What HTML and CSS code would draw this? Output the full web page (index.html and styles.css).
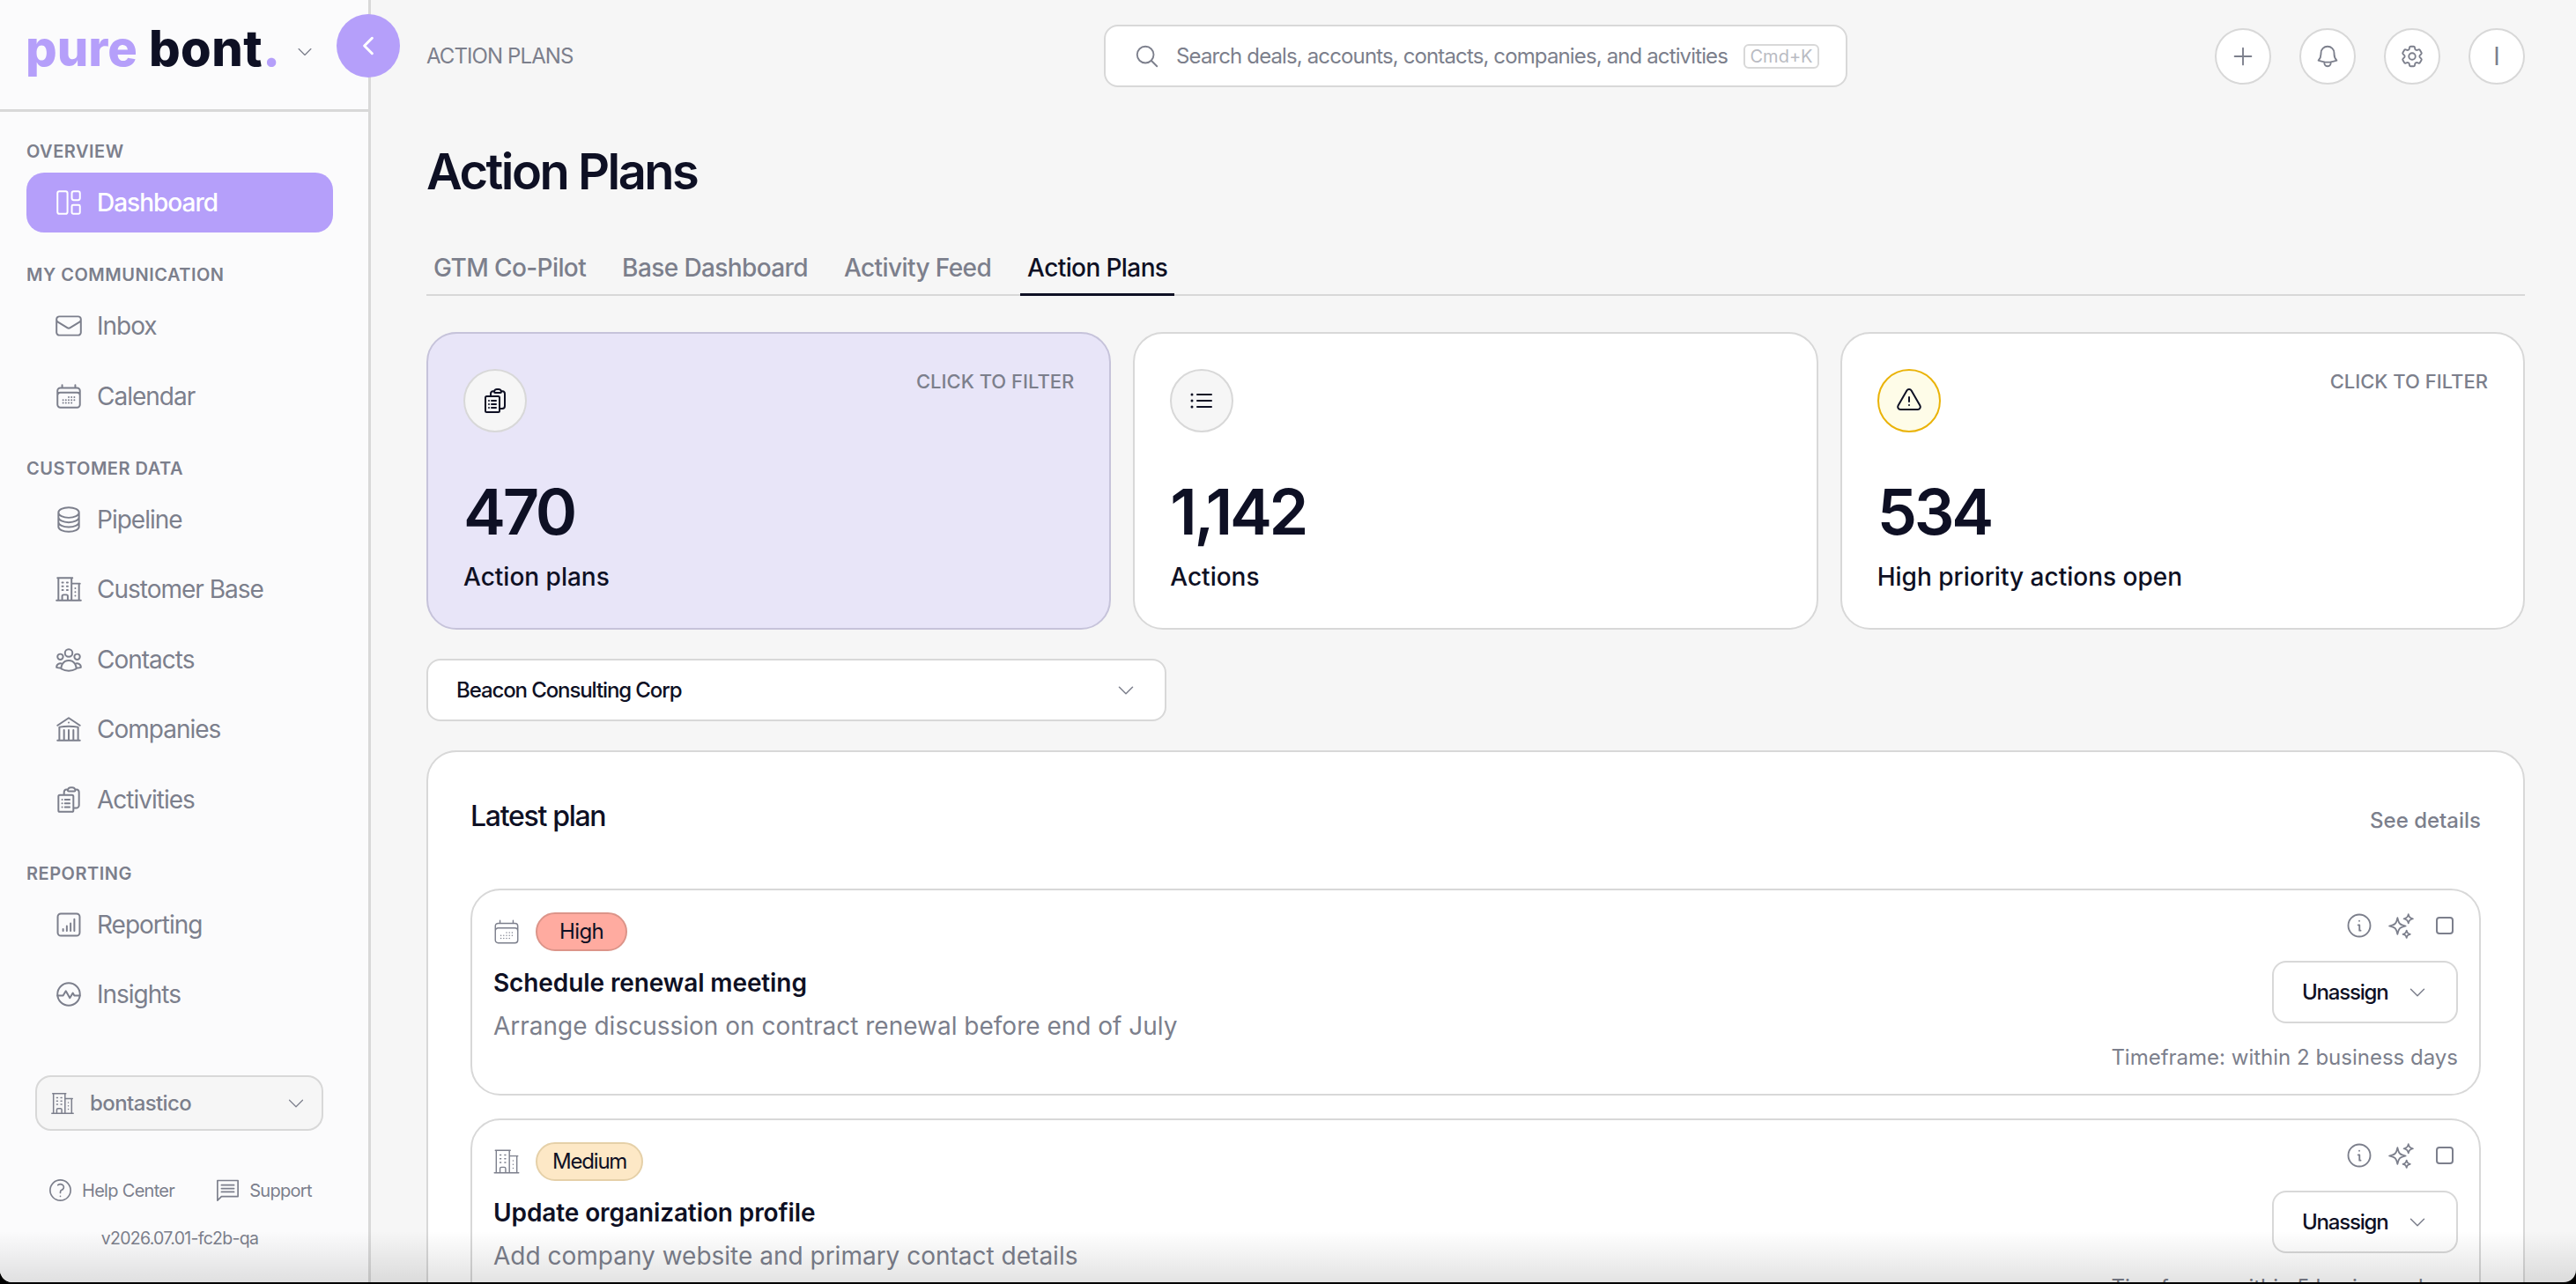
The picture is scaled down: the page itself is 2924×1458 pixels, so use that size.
FILE: index.html
```html
<!doctype html>
<html lang="en">
  <head>
    <title>Action Plans</title>
    <meta charset="utf-8"/>
    <link rel="stylesheet" href="styles.css">
  </head>
  <body>
    <svg class="icon-defs" xmlns="http://www.w3.org/2000/svg">
      <symbol id="i-chevron" viewBox="0 0 24 24"><path d="M19.5 8.25l-7.5 7.5-7.5-7.5"/></symbol>
      <symbol id="i-search" viewBox="0 0 24 24"><path d="M21 21l-5.197-5.197m0 0A7.5 7.5 0 105.196 5.196a7.5 7.5 0 0010.607 10.607z"/></symbol>
      <symbol id="i-plus" viewBox="0 0 24 24"><path d="M12 4.5v15m7.5-7.5h-15"/></symbol>
      <symbol id="i-bell" viewBox="0 0 24 24"><path d="M14.857 17.082a23.848 23.848 0 005.454-1.31A8.967 8.967 0 0118 9.75v-.7V9A6 6 0 006 9v.75a8.967 8.967 0 01-2.312 6.022c1.733.64 3.56 1.085 5.455 1.31m5.714 0a24.255 24.255 0 01-5.714 0m5.714 0a3 3 0 11-5.714 0"/></symbol>
      <symbol id="i-cog" viewBox="0 0 24 24"><path d="M9.594 3.94c.09-.542.56-.94 1.11-.94h2.593c.55 0 1.02.398 1.11.94l.213 1.281c.063.374.313.686.645.87.074.04.147.083.22.127.324.196.72.257 1.075.124l1.217-.456a1.125 1.125 0 011.37.49l1.296 2.247a1.125 1.125 0 01-.26 1.431l-1.003.827c-.293.24-.438.613-.431.992a6.759 6.759 0 010 .255c-.007.378.138.75.43.99l1.005.828c.424.35.534.954.26 1.43l-1.298 2.247a1.125 1.125 0 01-1.369.491l-1.217-.456c-.355-.133-.75-.072-1.076.124a6.57 6.57 0 01-.22.128c-.331.183-.581.495-.644.869l-.213 1.28c-.09.543-.56.941-1.11.941h-2.594c-.55 0-1.02-.398-1.11-.94l-.213-1.281c-.062-.374-.312-.686-.644-.87a6.52 6.52 0 01-.22-.127c-.325-.196-.72-.257-1.076-.124l-1.217.456a1.125 1.125 0 01-1.369-.49l-1.297-2.247a1.125 1.125 0 01.26-1.431l1.004-.827c.292-.24.437-.613.43-.992a6.932 6.932 0 010-.255c.007-.378-.138-.75-.43-.99l-1.004-.828a1.125 1.125 0 01-.26-1.43l1.297-2.247a1.125 1.125 0 011.37-.491l1.216.456c.356.133.751.072 1.076-.124.072-.044.146-.087.22-.128.332-.183.582-.495.644-.869l.214-1.281zM15 12a3 3 0 11-6 0 3 3 0 016 0z"/></symbol>
      <symbol id="i-dashboard" viewBox="0 0 24 24"><rect x="3" y="3" width="8" height="18" rx="1.5"/><rect x="14.5" y="3" width="6.5" height="7" rx="1.5"/><rect x="14.5" y="14" width="6.5" height="7" rx="1"/></symbol>
      <symbol id="i-mail" viewBox="0 0 24 24"><path d="M21.75 6.75v10.5a2.25 2.25 0 01-2.25 2.25h-15a2.25 2.25 0 01-2.25-2.25V6.75m19.5 0A2.25 2.25 0 0019.5 4.5h-15a2.25 2.25 0 00-2.25 2.25m19.5 0v.243a2.25 2.25 0 01-1.07 1.916l-7.5 4.615a2.25 2.25 0 01-2.36 0L3.32 8.91a2.25 2.25 0 01-1.07-1.916V6.75"/></symbol>
      <symbol id="i-calendar" viewBox="0 0 24 24"><path d="M6.75 3v2.25M17.25 3v2.25M3 18.75V7.5a2.25 2.25 0 012.25-2.25h13.5A2.25 2.25 0 0121 7.5v11.25m-18 0A2.25 2.25 0 005.25 21h13.5A2.25 2.25 0 0021 18.75m-18 0v-7.5A2.25 2.25 0 015.25 9h13.5A2.25 2.25 0 0121 11.25v7.5m-9-6h.008v.008H12v-.008zM12 15h.008v.008H12V15zm0 2.25h.008v.008H12v-.008zM9.75 15h.008v.008H9.75V15zm0 2.25h.008v.008H9.75v-.008zM7.5 15h.008v.008H7.5V15zm0 2.25h.008v.008H7.5v-.008zm6.75-4.5h.008v.008h-.008v-.008zm0 2.25h.008v.008h-.008V15zm0 2.25h.008v.008h-.008v-.008zm2.25-4.5h.008v.008H16.5v-.008zm0 2.25h.008v.008H16.5V15z"/></symbol>
      <symbol id="i-stack" viewBox="0 0 24 24"><path d="M20.25 6.375c0 2.278-3.694 4.125-8.25 4.125S3.75 8.653 3.75 6.375m16.5 0c0-2.278-3.694-4.125-8.25-4.125S3.75 4.097 3.75 6.375m16.5 0v11.25c0 2.278-3.694 4.125-8.25 4.125s-8.25-1.847-8.25-4.125V6.375m16.5 0v3.75m-16.5-3.75v3.75m16.5 0v3.75C20.25 16.153 16.556 18 12 18s-8.25-1.847-8.25-4.125v-3.75m16.5 0c0 2.278-3.694 4.125-8.25 4.125s-8.25-1.847-8.25-4.125"/></symbol>
      <symbol id="i-building" viewBox="0 0 24 24"><path d="M2.25 21h19.5m-18-18v18m10.5-18v18m6-13.5V21M6.75 6.75h.75m-.75 3h.75m-.75 3h.75m3-6h.75m-.75 3h.75m-.75 3h.75M6.75 21v-3.375c0-.621.504-1.125 1.125-1.125h2.25c.621 0 1.125.504 1.125 1.125V21M3 3h12m-.75 4.5H21m-3.75 3.75h.008v.008h-.008v-.008zm0 3h.008v.008h-.008v-.008zm0 3h.008v.008h-.008v-.008z"/></symbol>
      <symbol id="i-group" viewBox="0 0 24 24"><path d="M18 18.72a9.094 9.094 0 003.741-.479 3 3 0 00-4.682-2.72m.94 3.198l.001.031c0 .225-.012.447-.037.666A11.944 11.944 0 0112 21c-2.17 0-4.207-.576-5.963-1.584A6.062 6.062 0 016 18.719m12 0a5.971 5.971 0 00-.941-3.197m0 0A5.995 5.995 0 0012 12.75a5.995 5.995 0 00-5.058 2.772m0 0a3 3 0 00-4.681 2.72 8.986 8.986 0 003.74.477m.94-3.197a5.971 5.971 0 00-.94 3.197M15 6.75a3 3 0 11-6 0 3 3 0 016 0zm6 3a2.25 2.25 0 11-4.5 0 2.25 2.25 0 014.5 0zm-13.5 0a2.25 2.25 0 11-4.5 0 2.25 2.25 0 014.5 0z"/></symbol>
      <symbol id="i-library" viewBox="0 0 24 24"><path d="M12 21v-8.25M15.75 21v-8.25M8.25 21v-8.25M3 9l9-6 9 6m-1.5 12V10.332A48.36 48.36 0 0012 9.75c-2.551 0-5.056.2-7.5.582V21M3 21h18M12 6.75h.008v.008H12V6.75z"/></symbol>
      <symbol id="i-clipboard" viewBox="0 0 24 24"><path d="M9 12h3.75M9 15h3.75M9 18h3.75m3 .75H18a2.25 2.25 0 002.25-2.25V6.108c0-1.135-.845-2.098-1.976-2.192a48.424 48.424 0 00-1.123-.08m-5.801 0c-.065.21-.1.433-.1.664 0 .414.336.75.75.75h4.5a.75.75 0 00.75-.75 2.25 2.25 0 00-.1-.664m-5.8 0A2.251 2.251 0 0113.5 2.25H15c1.012 0 1.867.668 2.15 1.586m-5.8 0c-.376.023-.75.05-1.124.08C9.095 4.01 8.25 4.973 8.25 6.108V8.25m0 0H4.875c-.621 0-1.125.504-1.125 1.125v11.25c0 .621.504 1.125 1.125 1.125h9.75c.621 0 1.125-.504 1.125-1.125V9.375c0-.621-.504-1.125-1.125-1.125H8.25zM6.75 12h.008v.008H6.75V12zm0 3h.008v.008H6.75V15zm0 3h.008v.008H6.75V18z"/></symbol>
      <symbol id="i-chart" viewBox="0 0 24 24"><rect x="3.2" y="3.2" width="17.6" height="17.6" rx="2.5"/><path d="M7.5 17v-1.5M10.5 17v-4M13.5 17v-6M16.5 17V7.5"/></symbol>
      <symbol id="i-pulse" viewBox="0 0 24 24"><circle cx="12" cy="12" r="9"/><path d="M3 13h4.5l2.2-3.6 3.2 5.6 2.4-4 1.2 2H21"/></symbol>
      <symbol id="i-help" viewBox="0 0 24 24"><path d="M9.879 7.519c1.171-1.025 3.071-1.025 4.242 0 1.172 1.025 1.172 2.687 0 3.712-.203.179-.43.326-.67.442-.745.361-1.45.999-1.45 1.827v.75M21 12a9 9 0 11-18 0 9 9 0 0118 0zm-9 5.25h.008v.008H12v-.008z"/></symbol>
      <symbol id="i-chat" viewBox="0 0 24 24"><path d="M3 3.5h18v14H6.5L3 21z"/><path d="M6.5 7.5h11M6.5 10.5h11M6.5 13.5h11"/></symbol>
      <symbol id="i-info" viewBox="0 0 24 24"><circle cx="12" cy="12" r="10"/><path d="M11 11.5h1.2v5h1M12 7.8h.01"/></symbol>
      <symbol id="i-sparkles" viewBox="0 0 24 24"><path d="M9.813 15.904L9 18.75l-.813-2.846a4.5 4.5 0 00-3.09-3.09L2.25 12l2.846-.813a4.5 4.5 0 003.09-3.09L9 5.25l.813 2.846a4.5 4.5 0 003.09 3.09L15.75 12l-2.846.813a4.5 4.5 0 00-3.09 3.09zM18.259 8.715L18 9.75l-.259-1.035a3.375 3.375 0 00-2.455-2.456L14.25 6l1.036-.259a3.375 3.375 0 002.455-2.456L18 2.25l.259 1.035a3.375 3.375 0 002.456 2.456L21.75 6l-1.035.259a3.375 3.375 0 00-2.456 2.456zM16.894 20.567L16.5 21.75l-.394-1.183a2.25 2.25 0 00-1.423-1.423L13.5 18.75l1.183-.394a2.25 2.25 0 001.423-1.423l.394-1.183.394 1.183a2.25 2.25 0 001.423 1.423l1.183.394-1.183.394a2.25 2.25 0 00-1.423 1.423z"/></symbol>
      <symbol id="i-warning" viewBox="0 0 24 24"><path d="M12 9v3.75m-9.303 3.376c-.866 1.5.217 3.374 1.948 3.374h14.71c1.73 0 2.813-1.874 1.948-3.374L13.949 3.378c-.866-1.5-3.032-1.5-3.898 0L2.697 16.126zM12 15.75h.007v.008H12v-.008z"/></symbol>
      <symbol id="i-list" viewBox="0 0 24 24"><path d="M8.25 6.75h12M8.25 12h12m-12 5.25h12M3.75 6.75h.007v.008H3.75V6.75zm.375 0a.375.375 0 11-.75 0 .375.375 0 01.75 0zM3.75 12h.007v.008H3.75V12zm.375 0a.375.375 0 11-.75 0 .375.375 0 01.75 0zm-.375 5.25h.007v.008H3.75v-.008zm.375 0a.375.375 0 11-.75 0 .375.375 0 01.75 0z"/></symbol>
    </svg>

    <div id="app">
      <!-- sidebar -->
      <aside class="sidebar">
        <div class="logo-bar">
          <div class="logo"><span class="logo-pure">pure</span><span class="logo-bont">bont<span class="logo-dot">.</span></span></div>
          <svg class="icon logo-chevron"><use href="#i-chevron"/></svg>
        </div>
        <nav class="nav">
          <div class="nav-group">
            <div class="nav-label">OVERVIEW</div>
            <a class="nav-item active"><svg class="icon"><use href="#i-dashboard"/></svg>Dashboard</a>
          </div>
          <div class="nav-group">
            <div class="nav-label">MY COMMUNICATION</div>
            <a class="nav-item"><svg class="icon"><use href="#i-mail"/></svg>Inbox</a>
            <a class="nav-item"><svg class="icon"><use href="#i-calendar"/></svg>Calendar</a>
          </div>
          <div class="nav-group">
            <div class="nav-label">CUSTOMER DATA</div>
            <a class="nav-item"><svg class="icon"><use href="#i-stack"/></svg>Pipeline</a>
            <a class="nav-item"><svg class="icon"><use href="#i-building"/></svg>Customer Base</a>
            <a class="nav-item"><svg class="icon"><use href="#i-group"/></svg>Contacts</a>
            <a class="nav-item"><svg class="icon"><use href="#i-library"/></svg>Companies</a>
            <a class="nav-item"><svg class="icon"><use href="#i-clipboard"/></svg>Activities</a>
          </div>
          <div class="nav-group">
            <div class="nav-label">REPORTING</div>
            <a class="nav-item"><svg class="icon"><use href="#i-chart"/></svg>Reporting</a>
            <a class="nav-item"><svg class="icon"><use href="#i-pulse"/></svg>Insights</a>
          </div>
        </nav>
        <div class="side-foot">
          <div class="workspace">
            <svg class="icon"><use href="#i-building"/></svg>
            <span class="workspace-name">bontastico</span>
            <svg class="icon workspace-chevron"><use href="#i-chevron"/></svg>
          </div>
          <div class="foot-links">
            <a><svg class="icon"><use href="#i-help"/></svg>Help Center</a>
            <a><svg class="icon"><use href="#i-chat"/></svg>Support</a>
          </div>
          <div class="version">v2026.07.01-fc2b-qa</div>
        </div>
      </aside>

      <!-- collapse button sits over the sidebar edge -->
      <button class="collapse-btn"><svg class="icon"><use href="#i-chevron"/></svg></button>

      <main class="main">
        <header class="topbar">
          <div class="crumb">ACTION PLANS</div>
          <div class="search">
            <svg class="icon"><use href="#i-search"/></svg>
            <span class="search-text">Search deals, accounts, contacts, companies, and activities</span>
            <span class="kbd">Cmd+K</span>
          </div>
          <div class="top-actions">
            <div class="round-btn"><svg class="icon"><use href="#i-plus"/></svg></div>
            <div class="round-btn"><svg class="icon"><use href="#i-bell"/></svg></div>
            <div class="round-btn"><svg class="icon"><use href="#i-cog"/></svg></div>
            <div class="round-btn avatar">I</div>
          </div>
        </header>

        <h1 class="page-title">Action Plans</h1>

        <div class="tabs">
          <a class="tab">GTM Co-Pilot</a>
          <a class="tab">Base Dashboard</a>
          <a class="tab">Activity Feed</a>
          <a class="tab current">Action Plans</a>
        </div>

        <section class="stats">
          <div class="stat selected">
            <div class="stat-top">
              <div class="stat-icon"><svg class="icon"><use href="#i-clipboard"/></svg></div>
              <span class="stat-hint">CLICK TO FILTER</span>
            </div>
            <div class="stat-num">470</div>
            <div class="stat-label">Action plans</div>
          </div>
          <div class="stat">
            <div class="stat-top">
              <div class="stat-icon"><svg class="icon"><use href="#i-list"/></svg></div>
            </div>
            <div class="stat-num">1,142</div>
            <div class="stat-label">Actions</div>
          </div>
          <div class="stat">
            <div class="stat-top">
              <div class="stat-icon warn"><svg class="icon"><use href="#i-warning"/></svg></div>
              <span class="stat-hint">CLICK TO FILTER</span>
            </div>
            <div class="stat-num">534</div>
            <div class="stat-label">High priority actions open</div>
          </div>
        </section>

        <div class="account-select">
          <span>Beacon Consulting Corp</span>
          <svg class="icon"><use href="#i-chevron"/></svg>
        </div>

        <section class="panel">
          <div class="panel-head">
            <h2>Latest plan</h2>
            <a class="see-details">See details</a>
          </div>

          <article class="plan">
            <div class="plan-left">
              <div class="plan-tags">
                <svg class="icon"><use href="#i-calendar"/></svg>
                <span class="badge high">High</span>
              </div>
              <div class="plan-title">Schedule renewal meeting</div>
              <div class="plan-desc">Arrange discussion on contract renewal before end of July</div>
            </div>
            <div class="plan-right">
              <div class="plan-tools">
                <svg class="icon tool-info"><use href="#i-info"/></svg>
                <svg class="icon tool-spark"><use href="#i-sparkles"/></svg>
                <span class="check"></span>
              </div>
              <div class="assign">Unassign<svg class="icon"><use href="#i-chevron"/></svg></div>
              <div class="timeframe">Timeframe: within 2 business days</div>
            </div>
          </article>

          <article class="plan">
            <div class="plan-left">
              <div class="plan-tags">
                <svg class="icon"><use href="#i-building"/></svg>
                <span class="badge medium">Medium</span>
              </div>
              <div class="plan-title">Update organization profile</div>
              <div class="plan-desc">Add company website and primary contact details</div>
            </div>
            <div class="plan-right">
              <div class="plan-tools">
                <svg class="icon tool-info"><use href="#i-info"/></svg>
                <svg class="icon tool-spark"><use href="#i-sparkles"/></svg>
                <span class="check"></span>
              </div>
              <div class="assign">Unassign<svg class="icon"><use href="#i-chevron"/></svg></div>
              <div class="timeframe">Timeframe: within 5 business days</div>
            </div>
          </article>
        </section>
      </main>

      <!-- window shadow at the bottom of the capture -->
      <div class="bottom-fade"></div>
    </div>
  </body>
</html>
```

FILE: styles.css
```css
/* page */
*{
  box-sizing: border-box;
}
html, body{
  margin: 0;
  height: 100%;
  overflow: hidden;
}
body{
  background: #000;
  font-family: Inter, "Liberation Sans", sans-serif;
  color: #0e1024;
}
h1, h2{
  margin: 0;
}
.icon-defs{
  display: none;
}
.icon{
  width: 28px;
  height: 28px;
  flex: none;
  fill: none;
  stroke: currentColor;
  stroke-width: 1.5;
  stroke-linecap: round;
  stroke-linejoin: round;
}
#app{
  position: relative;
  display: flex;
  height: 1456px;
  overflow: hidden;
  background: #f6f6f6;
  border-radius: 0 0 14px 14px;
}

/* sidebar */
.sidebar{
  width: 421px;
  flex: none;
  display: flex;
  flex-direction: column;
  background: #fbfbfc;
  border-right: 3px solid #d8d8d8;
  color: #7c7f8c;
}
.logo-bar{
  height: 127px;
  flex: none;
  display: flex;
  align-items: flex-start;
  padding: 21px 0 0 29px;
  border-bottom: 3px solid #d8d8d8;
}
.logo{
  display: flex;
  gap: 13px;
  font-size: 56px;
  line-height: 68px;
  font-weight: 800;
}
.logo-pure{
  color: #b59ffa;
}
.logo-bont{
  color: #0e1024;
  letter-spacing: .5px;
}
.logo-dot{
  color: #b59ffa;
}
.logo-chevron{
  width: 22px;
  height: 22px;
  margin: 27px 0 0 17px;
  stroke-width: 1.4;
}
.nav{
  padding: 31px 40px 0 30px;
  display: flex;
  flex-direction: column;
  gap: 34px;
}
.nav-group{
  display: flex;
  flex-direction: column;
  gap: 11.5px;
}
.nav-group:last-child{
  margin-top: 2px;
}
.nav-label{
  height: 28px;
  line-height: 28px;
  font-size: 20px;
  font-weight: 600;
  letter-spacing: .5px;
  margin-bottom: -1.5px;
}
.nav-item{
  height: 68px;
  display: flex;
  align-items: center;
  gap: 15px;
  padding-left: 31px;
  font-size: 28px;
  border-radius: 20px;
  letter-spacing: -1px;
}
.nav-item .icon{
  width: 34px;
  height: 34px;
  stroke-width: 1.4;
}
.nav-item.active{
  background: #b59ffa;
  color: #fff;
  font-weight: 500;
}
.side-foot{
  margin-top: auto;
  padding: 0 20px 37px 10px;
}
.workspace{
  width: 327px;
  height: 63px;
  margin-left: 30px;
  display: flex;
  align-items: center;
  gap: 16px;
  padding: 0 17px 0 14px;
  background: #f6f6f6;
  border: 2px solid #d8d8d8;
  border-radius: 18px;
}
.workspace .icon{
  width: 30px;
  height: 30px;
  stroke-width: 1.2;
}
.workspace-name{
  font-size: 24px;
  font-weight: 500;
  letter-spacing: -.6px;
}
.workspace .workspace-chevron{
  width: 24px;
  height: 24px;
  margin-left: auto;
}
.foot-links{
  display: flex;
  gap: 45px;
  margin: 52px 0 0 43px;
  font-size: 20px;
}
.foot-links a{
  display: flex;
  align-items: center;
  gap: 9px;
  letter-spacing: -.7px;
}
.foot-links .icon{
  width: 31px;
  height: 31px;
  stroke-width: 1.3;
}
.version{
  margin: 26px 0 0 0;
  text-align: center;
  font-size: 19.5px;
  line-height: 26px;
  letter-spacing: -.7px;
}
.collapse-btn{
  position: absolute;
  left: 382px;
  top: 16px;
  width: 72px;
  height: 72px;
  padding: 0;
  display: flex;
  align-items: center;
  justify-content: center;
  background: #b59ffa;
  border: none;
  border-radius: 50%;
  color: #fff;
}
.collapse-btn .icon{
  width: 28px;
  height: 28px;
  stroke-width: 2.6;
  transform: rotate(90deg);
}

/* main column */
.main{
  flex: 1;
  min-width: 0;
  padding: 0 58px 0 63px;
}
.topbar{
  height: 127px;
  display: grid;
  grid-template-columns: 1fr auto 1fr;
  align-items: center;
}
.crumb{
  font-size: 24px;
  color: #7c7f8c;
  letter-spacing: -.9px;
}
.search{
  width: 844px;
  height: 71px;
  display: flex;
  align-items: center;
  gap: 18px;
  padding: 0 32px 0 32px;
  background: #fff;
  border: 2px solid #d8d8d8;
  border-radius: 16px;
  color: #7c7f8c;
  font-size: 24px;
  letter-spacing: -.87px;
  white-space: nowrap;
}
.search .icon{
  width: 30px;
  height: 30px;
}
.kbd{
  margin-left: auto;
  height: 28px;
  width: 86px;
  flex: none;
  display: flex;
  align-items: center;
  justify-content: center;
  border: 2px solid #d8d8d8;
  border-radius: 6px;
  font-size: 20px;
  color: #b9bbc2;
  letter-spacing: 0;
}
.top-actions{
  display: flex;
  justify-content: flex-end;
  gap: 32px;
}
.round-btn{
  width: 64px;
  height: 64px;
  display: flex;
  align-items: center;
  justify-content: center;
  background: #fff;
  border: 2px solid #d8d8d8;
  border-radius: 50%;
  color: #7c7f8c;
}
.round-btn .icon{
  width: 30px;
  height: 30px;
}
.avatar{
  font-size: 28px;
}
.page-title{
  height: 68px;
  margin-top: 34px;
  font-size: 56px;
  line-height: 68px;
  font-weight: 600;
  letter-spacing: -2.5px;
}
.tabs{
  display: flex;
  gap: 25px;
  height: 73px;
  margin-top: 34px;
  padding-top: 19px;
  border-bottom: 2px solid #d8d8d8;
}
.tab{
  height: 54px;
  padding: 0 8px;
  line-height: 44px;
  font-size: 28px;
  font-weight: 500;
  color: #7c7f8c;
  letter-spacing: -.6px;
}
.tab.current{
  color: #0e1024;
  border-bottom: 3px solid #0e1024;
}

/* stat cards */
.stats{
  display: grid;
  grid-template-columns: repeat(3, 1fr);
  gap: 25px;
  margin-top: 41px;
}
.stat{
  height: 338px;
  padding: 40px;
  background: #fff;
  border: 2px solid #d8d8d8;
  border-radius: 34px;
}
.stat.selected{
  background: #e8e5f8;
  border-color: #c6c3da;
}
.stat-top{
  display: flex;
  justify-content: space-between;
  height: 72px;
}
.stat-icon{
  width: 72px;
  height: 72px;
  display: flex;
  align-items: center;
  justify-content: center;
  background: #f6f6f6;
  border: 2px solid #d8d8d8;
  border-radius: 50%;
  color: #0e1024;
}
.stat-icon .icon{
  width: 32px;
  height: 32px;
}
.stat-icon.warn{
  background: #fefce8;
  border-color: #eab308;
}
.stat-hint{
  font-size: 22px;
  line-height: 28px;
  font-weight: 500;
  color: #7c7f8c;
}
.stat-num{
  margin-top: 50px;
  font-size: 72px;
  line-height: 80px;
  font-weight: 600;
  letter-spacing: -3.3px;
}
.stat-label{
  margin-top: 16px;
  font-size: 28px;
  line-height: 36px;
  font-weight: 500;
}

/* account dropdown */
.account-select{
  width: 840px;
  height: 71px;
  margin-top: 33px;
  display: flex;
  align-items: center;
  justify-content: space-between;
  padding: 0 32px;
  background: #fff;
  border: 2px solid #d8d8d8;
  border-radius: 16px;
  font-size: 24px;
  font-weight: 500;
  letter-spacing: -1.1px;
}
.account-select .icon{
  width: 24px;
  height: 24px;
  color: #7c7f8c;
}

/* latest plan */
.panel{
  margin-top: 33px;
  padding: 51px 48px 40px 48px;
  background: #fff;
  border: 2px solid #d8d8d8;
  border-radius: 34px;
}
.panel-head{
  display: flex;
  justify-content: space-between;
  align-items: flex-end;
  margin-bottom: 60px;
}
.panel-head h2{
  font-size: 32px;
  line-height: 44px;
  font-weight: 500;
  letter-spacing: -1.3px;
}
.see-details{
  margin-bottom: 2px;
  font-size: 24px;
  line-height: 30px;
  color: #7c7f8c;
  font-weight: 500;
}
.plan{
  display: flex;
  justify-content: space-between;
  height: 235px;
  margin-bottom: 26px;
  padding: 25px 24px 0 24px;
  border: 2px solid #d8d8d8;
  border-radius: 34px;
}
.plan-tags{
  display: flex;
  align-items: center;
  gap: 16px;
  height: 44px;
  color: #7c7f8c;
}
.plan-tags .icon{
  width: 34px;
  height: 34px;
  margin-left: -2px;
  stroke-width: 1;
}
.badge{
  height: 44px;
  padding: 0 25px;
  line-height: 40px;
  border: 2px solid;
  border-radius: 22px;
  font-size: 24px;
  letter-spacing: -.6px;
  color: #0e1024;
}
.badge.high{
  background: #ffaba0;
  border-color: #dc9489;
}
.badge.medium{
  padding: 0 17px;
  background: #fde8c6;
  border-color: #e5d0a8;
  letter-spacing: -1.2px;
}
.plan-title{
  margin-top: 17px;
  font-size: 28px;
  line-height: 38px;
  font-weight: 600;
  letter-spacing: -.1px;
}
.plan-desc{
  margin-top: 12px;
  font-size: 28px;
  line-height: 36px;
  color: #7c7f8c;
}
.plan-right{
  display: flex;
  flex-direction: column;
  align-items: flex-end;
}
.plan-tools{
  display: flex;
  align-items: center;
  gap: 23px;
  height: 28px;
  margin: 1px 5px 0 0;
  color: #7c7f8c;
}
.plan-tools .tool-info{
  width: 30px;
  height: 30px;
  margin-right: -7px;
}
.plan-tools .tool-spark{
  width: 33px;
  height: 33px;
  stroke-width: 1.3;
}
.check{
  width: 20px;
  height: 20px;
  border: 2px solid #7c7f8c;
  border-radius: 4px;
}
.assign{
  width: 211px;
  height: 71px;
  margin-top: 26px;
  display: flex;
  align-items: center;
  gap: 22px;
  padding-left: 32px;
  background: #fff;
  border: 2px solid #d8d8d8;
  border-radius: 16px;
  font-size: 24px;
  font-weight: 500;
  letter-spacing: -1.2px;
}
.assign .icon{
  width: 24px;
  height: 24px;
  color: #7c7f8c;
}
.timeframe{
  margin-top: 23px;
  font-size: 24px;
  line-height: 32px;
  color: #7c7f8c;
}
.bottom-fade{
  position: absolute;
  left: 0;
  right: 0;
  bottom: 0;
  height: 58px;
  background: linear-gradient(rgba(0,0,0,0), rgba(0,0,0,.11));
  pointer-events: none;
}
```
